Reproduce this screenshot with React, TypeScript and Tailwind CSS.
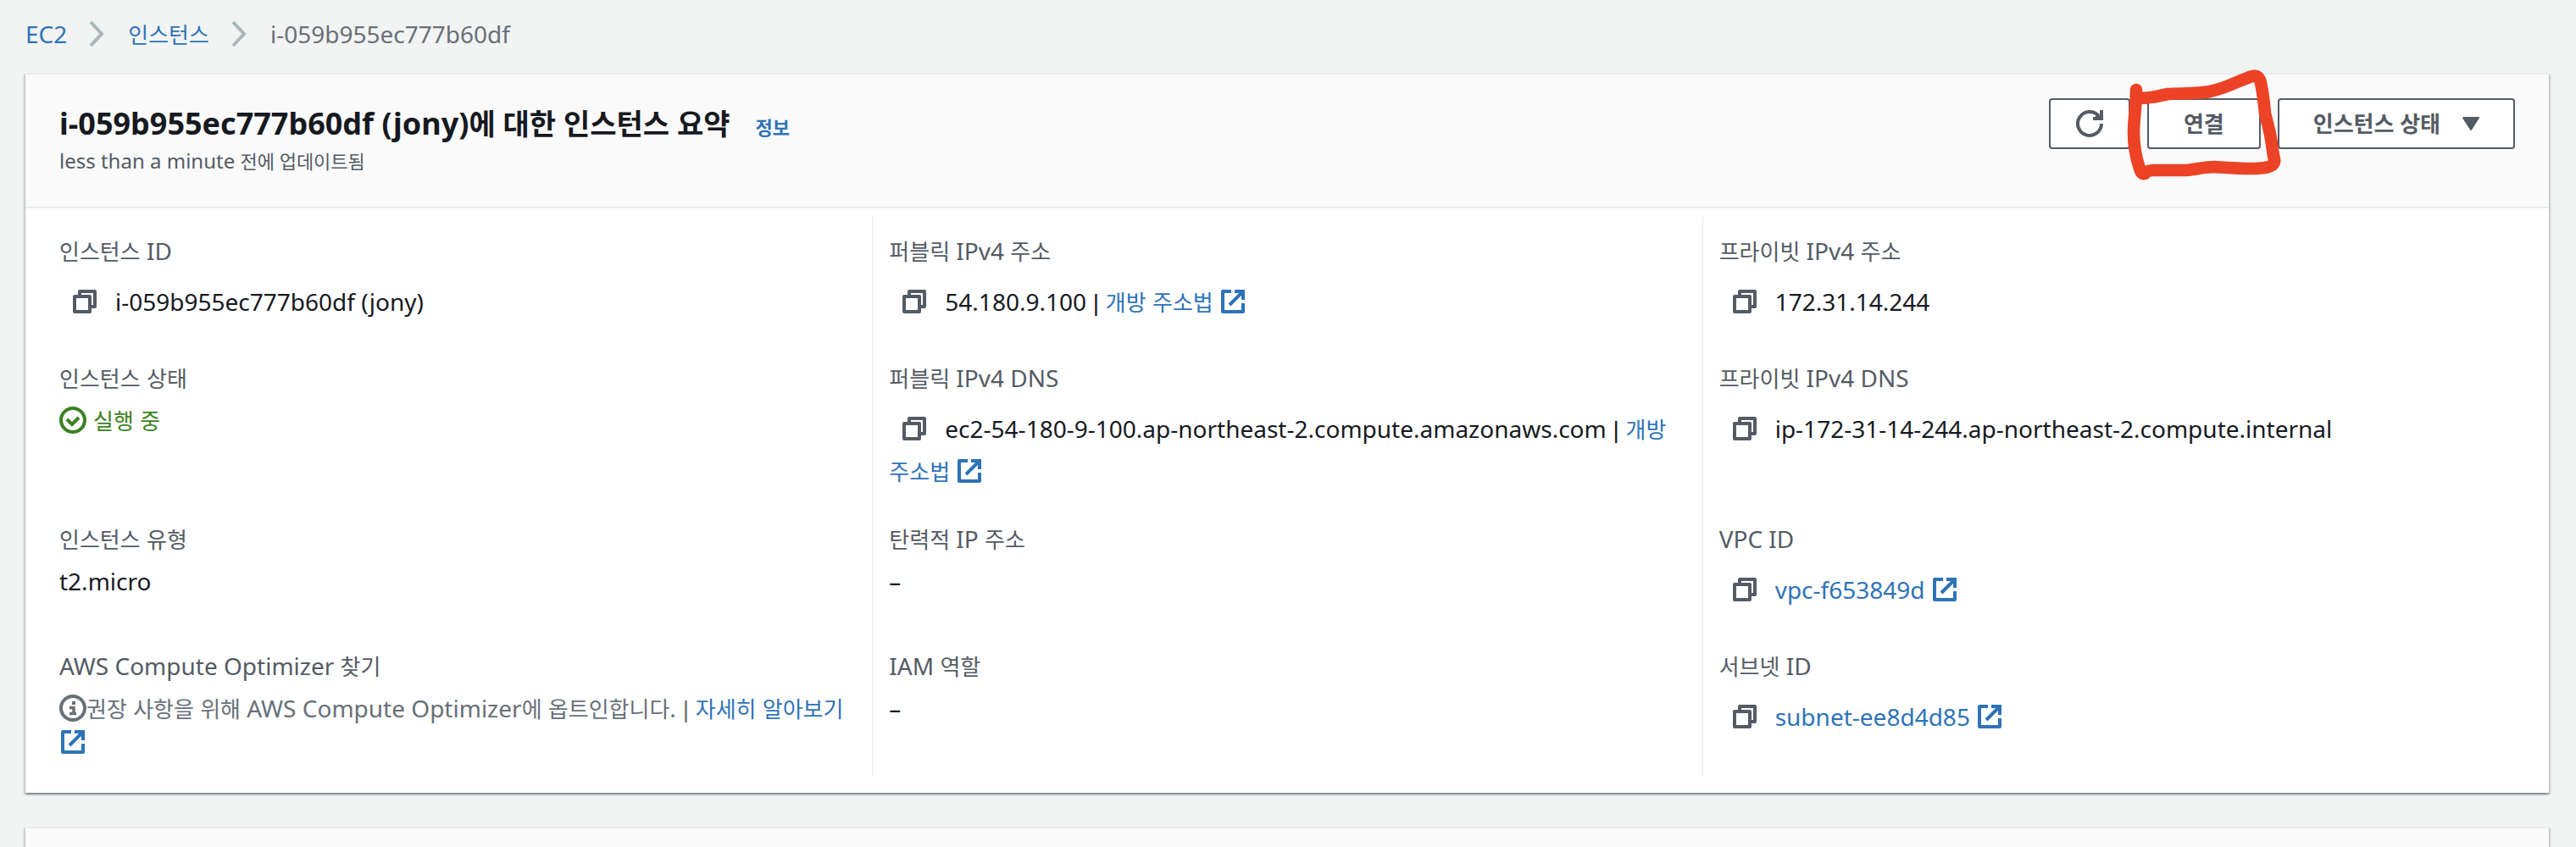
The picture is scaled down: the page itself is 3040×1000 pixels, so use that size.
import React from 'react';

type IconProps = { className?: string };

const CopyIcon = ({ className = '' }: IconProps) => (
  <svg viewBox="0 0 32 32" className={className} fill="none" stroke="currentColor" strokeWidth="4" strokeLinejoin="round">
    <path d="M4 10h18v18H4z" />
    <path d="M10 9V4h18v18h-5" />
  </svg>
);

const ExternalIcon = ({ className = '' }: IconProps) => (
  <svg viewBox="0 0 32 32" className={className} fill="none" stroke="currentColor" strokeWidth="4">
    <path d="M14 4H4v24h24V18" strokeLinejoin="round" />
    <path d="M18 4h10v10M28 4L12 20" />
  </svg>
);

const CheckIcon = ({ className = '' }: IconProps) => (
  <svg viewBox="0 0 32 32" className={className} fill="none" stroke="currentColor" strokeWidth="4">
    <circle cx="16" cy="16" r="14" />
    <path d="M9 15l6 6 8-8" />
  </svg>
);

const InfoIcon = ({ className = '' }: IconProps) => (
  <svg viewBox="0 0 32 32" className={className} fill="none" stroke="currentColor" strokeWidth="4">
    <circle cx="16" cy="16" r="14" />
    <path d="M17 8v4" />
    <path d="M12 15.5h5v7M12 22.5h8" strokeWidth="3.5" />
  </svg>
);

const RefreshIcon = ({ className = '' }: IconProps) => (
  <svg viewBox="0 0 32 32" className={className} fill="none" stroke="currentColor" strokeWidth="4">
    <path d="M30 16a14 14 0 1 1-3.4-9.2" />
    <path d="M30 0v10H20" />
    <path d="M24 6l5 4" />
  </svg>
);

const Chevron = () => (
  <svg viewBox="0 0 20 32" className="h-8 w-5 text-[#aab7b8]" fill="none" stroke="currentColor" strokeWidth="4">
    <path d="M2 2l13 14L2 30" />
  </svg>
);

// Hangul runs sit a step smaller than the Latin text around them
const Text = ({ children }: { children: string }) => (
  <>
    {children.split(/([가-힣]+)/).map((part, i) =>
      i % 2 ? <span key={i} className="text-[26px] leading-none">{part}</span> : part
    )}
  </>
);

const Pipe = () => <span className="font-['Liberation_Sans',sans-serif] leading-none"> | </span>;

const CopyButton = () => (
  <button type="button" aria-label="복사" className="mr-5 ml-[14px] inline-flex h-[60px] items-center align-[-5px] text-[#545b64]">
    <CopyIcon className="h-8 w-8" />
  </button>
);

const ExternalLink = ({ children }: { children: string }) => (
  <a href="#" className="text-[#2e73b8]">
    <Text>{children}</Text> <ExternalIcon className="inline h-8 w-8 align-[-5px]" />
  </a>
);

type Field = { label: string; value: React.ReactNode };

const FIELDS: Field[] = [
  { label: '인스턴스 ID', value: <><CopyButton />i-059b955ec777b60df (jony)</> },
  { label: '퍼블릭 IPv4 주소', value: <><CopyButton />54.180.9.100<Pipe /><ExternalLink>개방 주소법</ExternalLink></> },
  { label: '프라이빗 IPv4 주소', value: <><CopyButton />172.31.14.244</> },
  {
    label: '인스턴스 상태',
    value: (
      <span className="flex items-center gap-2 text-[#3a8220]">
        <CheckIcon className="h-8 w-8" />
        <span><Text>실행 중</Text></span>
      </span>
    ),
  },
  {
    label: '퍼블릭 IPv4 DNS',
    value: <><CopyButton />ec2-54-180-9-100.ap-northeast-2.compute.amazonaws.com<Pipe /><ExternalLink>개방 주소법</ExternalLink></>,
  },
  { label: '프라이빗 IPv4 DNS', value: <><CopyButton />ip-172-31-14-244.ap-northeast-2.compute.internal</> },
  { label: '인스턴스 유형', value: 't2.micro' },
  { label: '탄력적 IP 주소', value: '–' },
  { label: 'VPC ID', value: <><CopyButton /><ExternalLink>vpc-f653849d</ExternalLink></> },
  {
    label: 'AWS Compute Optimizer 찾기',
    value: (
      <span className="text-[#687078]">
        <InfoIcon className="inline h-8 w-8 align-[-5px]" />
        <Text>권장 사항을 위해 AWS Compute Optimizer에 옵트인합니다.</Text>
        <Pipe />
        <ExternalLink>자세히 알아보기</ExternalLink>
      </span>
    ),
  },
  { label: 'IAM 역할', value: '–' },
  { label: '서브넷 ID', value: <><CopyButton /><ExternalLink>subnet-ee8d4d85</ExternalLink></> },
];

const Breadcrumbs = () => (
  <nav aria-label="breadcrumb" className="flex h-20 items-center gap-[26px] px-[30px] text-[#687078]">
    <a href="#" className="text-[#2e73b8]">EC2</a>
    <Chevron />
    <a href="#" className="text-[#2e73b8]"><Text>인스턴스</Text></a>
    <Chevron />
    <span>i-059b955ec777b60df</span>
  </nav>
);

const CARD = 'border-t-2 border-[#eaeded] shadow-[0_2px_2px_rgba(0,28,36,0.3),2px_2px_2px_rgba(0,28,36,0.15),-2px_2px_2px_rgba(0,28,36,0.15)]';
const BUTTON = 'flex h-[60px] items-center rounded-[4px] border-2 border-[#545b64] bg-white text-[26px] font-bold';

export default function App() {
  return (
    <main className="h-screen overflow-hidden bg-[#f2f3f3] font-['Noto_Sans','Noto_Sans_CJK_KR',sans-serif] text-[28px] leading-[40px] text-[#16191f]">
      <Breadcrumbs />

      <section className={`mt-[6px] mr-8 ml-[30px] bg-white ${CARD}`}>
        <header className="flex h-[158px] items-start justify-between border-b-2 border-[#eaeded] bg-[#fafafa] px-10 pt-7">
          <div className="pt-2">
            <div className="flex items-baseline gap-[30px]">
              <h1 className="text-[36px] leading-[44px] font-bold">
                i-059b955ec777b60df (jony)<span className="text-[34px] leading-none">에 대한 인스턴스 요약</span>
              </h1>
              <a href="#" className="text-[22px] leading-none font-bold text-[#2e73b8]">정보</a>
            </div>
            <p className="text-[24px] leading-[44px] text-[#545b64]">
              less than a minute <span className="text-[22px] leading-none">전에 업데이트됨</span>
            </p>
          </div>
          <div className="flex gap-5 text-[#545b64]">
            <button type="button" aria-label="새로 고침" className={`${BUTTON} px-[30px]`}>
              <RefreshIcon className="h-8 w-8" />
            </button>
            <div className="relative">
              <button type="button" className={`${BUTTON} px-[41px]`}>연결</button>
              {/* hand-drawn marker round the connect button */}
              <svg
                viewBox="0 0 190 144"
                className="pointer-events-none absolute -top-10 -left-6 h-[144px] w-[190px]"
                fill="none"
                stroke="#ec4226"
                strokeWidth="14.6"
                strokeLinecap="round"
                strokeLinejoin="round"
              >
                <path d="M11 30C11 50 8 65 8 80C8 96 12 114 15 123Q17 130 21 129Q24 125 32 125C45 125 60 125 70 125C82 124 92 121 103 121C118 122 132 123 147 123C160 123 176 122 174 112C172 104 172 100 170 88C168 76 165 66 163 58C162 46 161 36 158 22Q156 12 148 14C134 18 118 28 98 32C84 35 64 34 48 35C38 37 30 40 16 40" />
              </svg>
            </div>
            <button type="button" aria-haspopup="menu" className={`${BUTTON} gap-[26px] px-10`}>
              인스턴스 상태
              <svg viewBox="0 0 20 16" className="h-4 w-5" fill="currentColor" stroke="currentColor" strokeWidth="2" strokeLinejoin="round">
                <path d="M1 1h18L10 15z" />
              </svg>
            </button>
          </div>
        </header>

        <dl className="grid grid-cols-3 px-5 pt-[10px] pb-5">
          {FIELDS.map((field, i) => (
            <div key={field.label} className={`border-l px-[19px] py-5 ${i % 3 ? 'border-[#e6e9e9]' : 'border-transparent'}`}>
              <dt className="mb-[10px] text-[#545b64]"><Text>{field.label}</Text></dt>
              <dd>{field.value}</dd>
            </div>
          ))}
        </dl>
      </section>

      <section className={`mt-10 mr-8 ml-[30px] h-20 bg-[#fafafa] ${CARD}`} />
    </main>
  );
}
